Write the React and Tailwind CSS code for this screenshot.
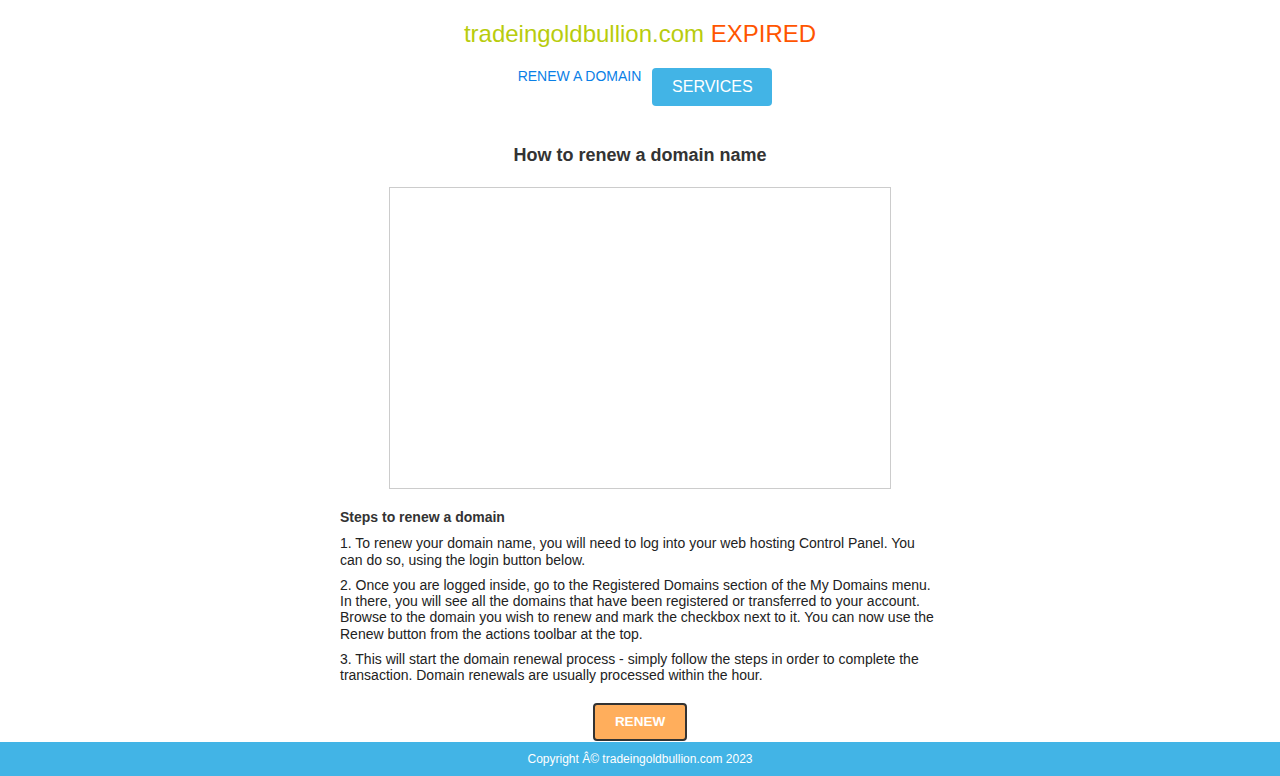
export default function App() {
  return (
    <div className="min-h-[776px] flex flex-col bg-white font-['Liberation_Sans',Arial,sans-serif]">
      <div className="flex-1 flex flex-col items-center">
        {/* Header */}
        <h1 className="pt-[20px] text-[24px] leading-[28px]">
          <span className="text-[#b8cc0d]">tradeingoldbullion.com</span>{' '}
          <span className="text-[#ff5500]">EXPIRED</span>
        </h1>

        {/* Nav */}
        <div className="mt-[20px] pl-[10px] flex items-start gap-[11px]">
          <a href="#" className="text-[14px] leading-[16px] text-[#0a7fe6]">RENEW A DOMAIN</a>
          <a href="#" className="w-[120px] h-[38px] rounded-[4px] bg-[#42b4e6] text-white text-[16px] flex items-center justify-center">
            SERVICES
          </a>
        </div>

        <h2 className="mt-[39px] text-[18px] leading-[21px] font-bold text-[#333]">How to renew a domain name</h2>

        <div className="mt-[21px] w-[502px] h-[302px] border border-[#ccc]"></div>

        {/* Steps */}
        <div className="mt-[20px] w-[600px] text-[14px] leading-[16.3px] text-[#222]">
          <p className="font-bold text-[#333] mb-[10px]">Steps to renew a domain</p>
          <p className="mb-[9px]">1. To renew your domain name, you will need to log into your web hosting Control Panel. You can do so, using the login button below.</p>
          <p className="mb-[9px]">2. Once you are logged inside, go to the Registered Domains section of the My Domains menu. In there, you will see all the domains that have been registered or transferred to your account. Browse to the domain you wish to renew and mark the checkbox next to it. You can now use the Renew button from the actions toolbar at the top.</p>
          <p>3. This will start the domain renewal process - simply follow the steps in order to complete the transaction. Domain renewals are usually processed within the hour.</p>
        </div>

        <button className="mt-[19px] w-[94px] h-[38px] rounded-[4px] border-2 border-[#333] bg-[#ffae5c] text-white text-[13.5px] font-bold">
          RENEW
        </button>
      </div>

      <footer className="h-[34px] bg-[#42b4e6] flex items-center justify-center text-white text-[12px]">
        Copyright Â© tradeingoldbullion.com 2023
      </footer>
    </div>
  );
}
